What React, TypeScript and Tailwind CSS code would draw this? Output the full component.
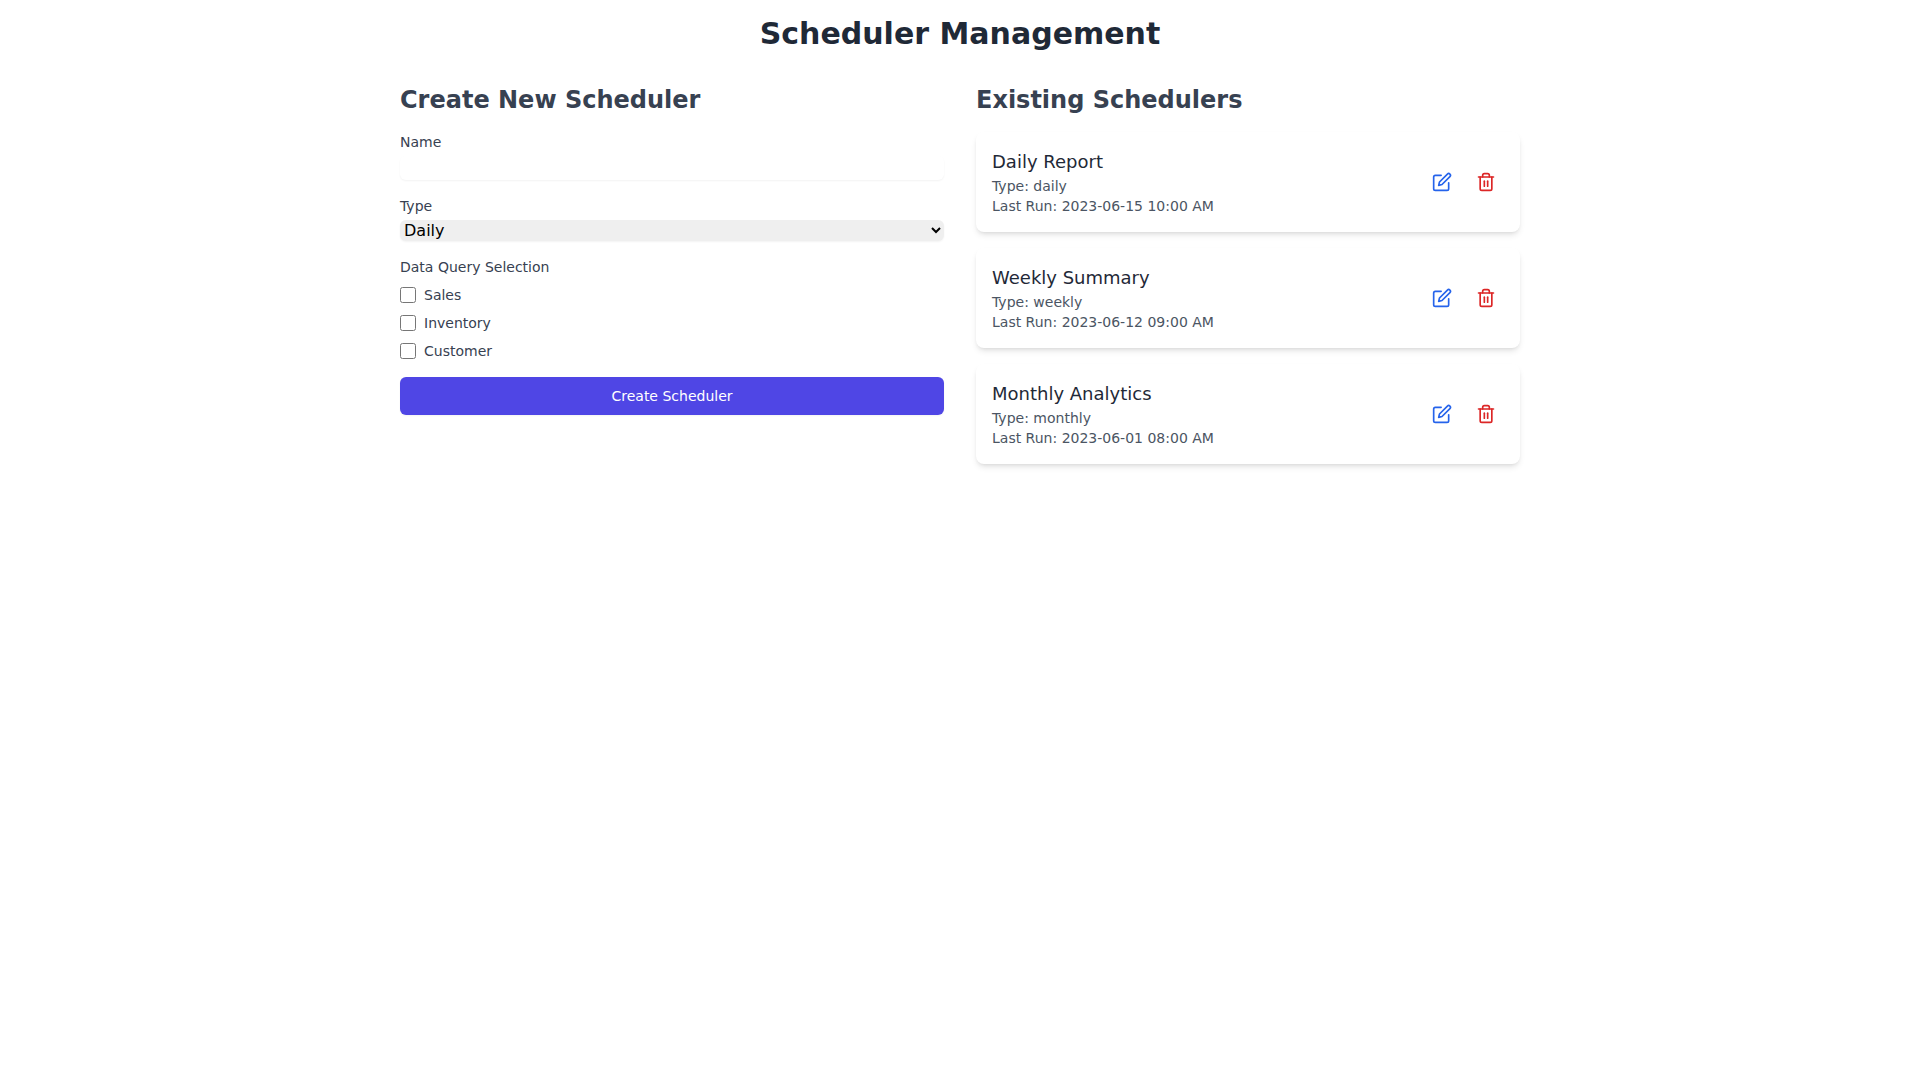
import React, { useState } from 'react';
import { FiEdit, FiTrash2 } from 'react-icons/fi';

interface Scheduler {
    id: number;
    name: string;
    type: string;
    lastRun: string;
}

const initialSchedulers: Scheduler[] = [
    { id: 1, name: 'Daily Report', type: 'daily', lastRun: '2023-06-15 10:00 AM' },
    { id: 2, name: 'Weekly Summary', type: 'weekly', lastRun: '2023-06-12 09:00 AM' },
    { id: 3, name: 'Monthly Analytics', type: 'monthly', lastRun: '2023-06-01 08:00 AM' },
];

const dataQueries = ['Sales', 'Inventory', 'Customer'];

export default function App() {
    const [schedulers, setSchedulers] = useState<Scheduler[]>(initialSchedulers);
    const [name, setName] = useState('');
    const [type, setType] = useState('daily');
    const [queries, setQueries] = useState<string[]>([]);

    const toggleQuery = (query: string) => {
        setQueries((prev) => (prev.includes(query) ? prev.filter((q) => q !== query) : [...prev, query]));
    };

    const handleSubmit = (e: React.FormEvent) => {
        e.preventDefault();
        if (!name) return;
        setSchedulers([...schedulers, { id: Date.now(), name, type, lastRun: 'Never' }]);
        setName('');
        setType('daily');
        setQueries([]);
    };

    const handleDelete = (id: number) => {
        setSchedulers(schedulers.filter((s) => s.id !== id));
    };

    return (
        <div className="max-w-6xl mx-auto p-4 font-['DejaVu_Sans',sans-serif]">
            <h1 className="text-3xl font-bold text-center text-[#1f2937] mb-8">Scheduler Management</h1>
            <div className="grid grid-cols-1 md:grid-cols-2 gap-8">
                <div>
                    <h2 className="text-2xl font-semibold text-[#374151] mb-4">Create New Scheduler</h2>
                    <form onSubmit={handleSubmit} className="space-y-4">
                        <div>
                            <label htmlFor="name" className="block text-sm font-medium text-[#374151]">
                                Name
                            </label>
                            <input
                                type="text"
                                id="name"
                                value={name}
                                onChange={(e) => setName(e.target.value)}
                                className="mt-1 block w-full rounded-md shadow-xs"
                            />
                        </div>
                        <div>
                            <label htmlFor="type" className="block text-sm font-medium text-[#374151]">
                                Type
                            </label>
                            <select
                                id="type"
                                value={type}
                                onChange={(e) => setType(e.target.value)}
                                className="mt-1 block w-full rounded-md bg-[#efefef] text-black shadow-xs"
                            >
                                <option value="daily">Daily</option>
                                <option value="weekly">Weekly</option>
                                <option value="monthly">Monthly</option>
                            </select>
                        </div>
                        <fieldset>
                            <legend className="block text-sm font-medium text-[#374151]">Data Query Selection</legend>
                            <div className="mt-2 space-y-2">
                                {dataQueries.map((query) => (
                                    <div key={query} className="flex items-center">
                                        <input
                                            type="checkbox"
                                            id={query}
                                            checked={queries.includes(query)}
                                            onChange={() => toggleQuery(query)}
                                            className="h-4 w-4"
                                        />
                                        <label htmlFor={query} className="ml-2 block text-sm text-[#374151]">
                                            {query}
                                        </label>
                                    </div>
                                ))}
                            </div>
                        </fieldset>
                        <button
                            type="submit"
                            className="w-full flex justify-center py-2 px-4 border border-transparent rounded-md shadow-xs text-sm font-medium text-white bg-[#4f46e5] hover:bg-[#4338ca]"
                        >
                            Create Scheduler
                        </button>
                    </form>
                </div>
                <div>
                    <h2 className="text-2xl font-semibold text-[#374151] mb-4">Existing Schedulers</h2>
                    <ul className="space-y-4">
                        {schedulers.map((scheduler) => (
                            <li
                                key={scheduler.id}
                                className="flex items-center justify-between bg-white shadow-md rounded-lg p-4"
                            >
                                <div>
                                    <h3 className="text-lg font-medium text-[#1f2937]">{scheduler.name}</h3>
                                    <p className="text-sm text-[#4b5563]">Type: {scheduler.type}</p>
                                    <p className="text-sm text-[#4b5563]">Last Run: {scheduler.lastRun}</p>
                                </div>
                                <div className="flex space-x-2">
                                    <button aria-label="Edit" className="p-2 text-[#2563eb] hover:text-[#1e40af]">
                                        <FiEdit className="w-5 h-5" />
                                    </button>
                                    <button
                                        aria-label="Delete"
                                        onClick={() => handleDelete(scheduler.id)}
                                        className="p-2 text-[#dc2626] hover:text-[#991b1b]"
                                    >
                                        <FiTrash2 className="w-5 h-5" />
                                    </button>
                                </div>
                            </li>
                        ))}
                    </ul>
                </div>
            </div>
        </div>
    );
}
